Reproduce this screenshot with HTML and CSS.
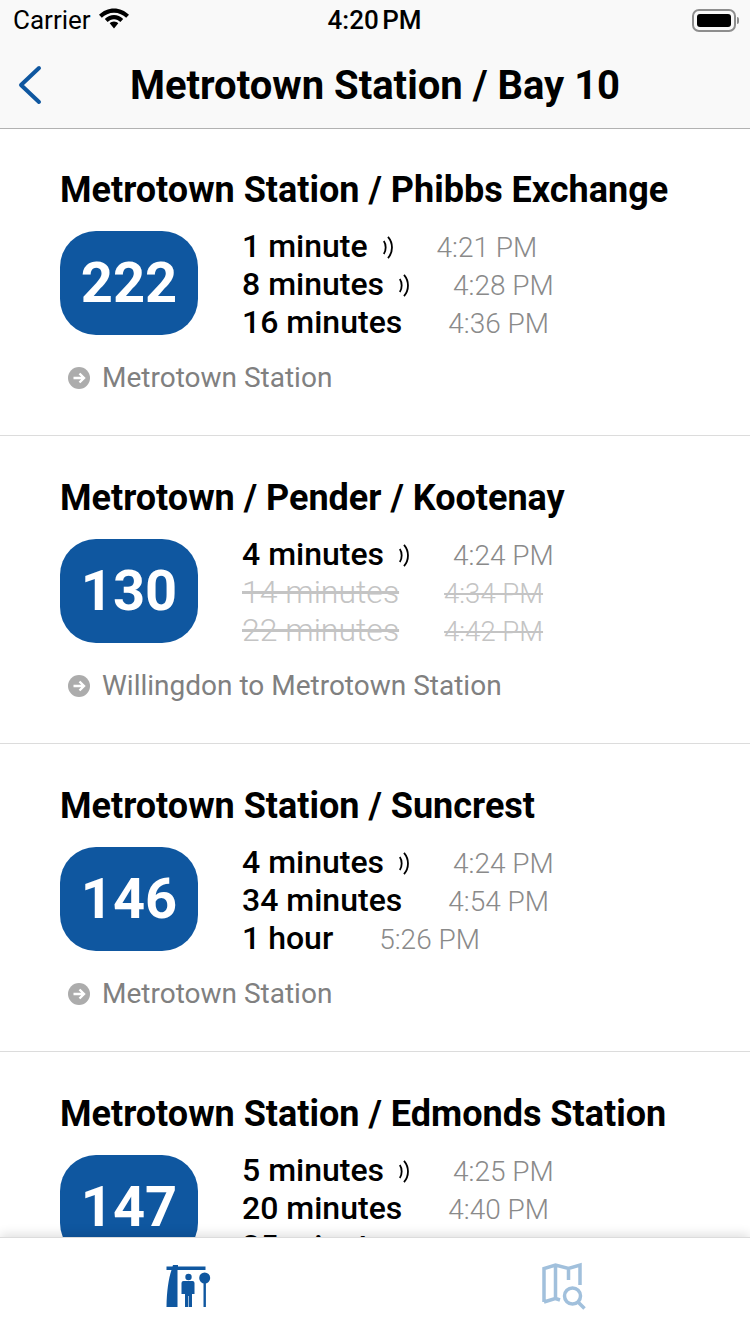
FILE: index.html
```html
<!DOCTYPE html>
<html lang="en">
<head>
  <meta charset="UTF-8" />
  <title>Metrotown Station / Bay 10</title>
  <link rel="stylesheet" href="styles.css">
</head>
<body>
  <div class="screen">
    <header class="top">
      <div class="status">
        <div class="status-left">
          <span>Carrier</span>
          <svg class="wifi" viewBox="0 0 30 22"><path d="M15 0.500C9.300 0.500 4 2.800 0 6.800L2.800 9.800C5.900 6.700 10.200 4.700 15 4.700S24.100 6.700 27.200 9.800L30 6.800C26 2.800 20.700 0.500 15 0.500Z M15 7C11.700 7 8.400 8.400 5.800 11L8.600 14C10.300 12.300 12.500 11.200 15 11.200S19.700 12.300 21.400 14L24.200 11C21.600 8.400 18.300 7 15 7Z M15 13.500C13.300 13.500 11.800 14.200 10.700 15.300L15 20.500L19.300 15.300C18.200 14.200 16.700 13.500 15 13.500Z"/></svg>
        </div>
        <div class="clock">4:20 PM</div>
        <div class="status-right">
          <div class="battery"><div class="battery-fill"></div></div>
          <div class="battery-cap"></div>
        </div>
      </div>
      <div class="nav">
        <svg class="back" viewBox="0 0 26 40"><path d="M22 3L4 20L22 37"/></svg>
        <h1>Metrotown Station / Bay 10</h1>
      </div>
    </header>

    <main class="list">
      <section class="route">
        <h2>Metrotown Station / Phibbs Exchange</h2>
        <div class="route-body">
          <div class="badge">222</div>
          <div class="times">
            <div class="row"><b>1 minute</b><svg class="live" viewBox="0 0 11 23"><path d="M0.800 5C3.300 8.500 3.300 14.500 0.800 18M5 0.800C10.300 7 10.300 16 5 22.200"/></svg><span>4:21 PM</span></div>
            <div class="row"><b>8 minutes</b><svg class="live" viewBox="0 0 11 23"><path d="M0.800 5C3.300 8.500 3.300 14.500 0.800 18M5 0.800C10.300 7 10.300 16 5 22.200"/></svg><span>4:28 PM</span></div>
            <div class="row"><b>16 minutes</b><span>4:36 PM</span></div>
          </div>
        </div>
        <div class="dest"><svg class="arrow" viewBox="0 0 22 22"><circle cx="11" cy="11" r="11"/><path d="M5.500 11H15.500M11.500 6.500L16 11L11.500 15.500"/></svg><span>Metrotown Station</span></div>
      </section>

      <section class="route">
        <h2>Metrotown / Pender / Kootenay</h2>
        <div class="route-body">
          <div class="badge">130</div>
          <div class="times">
            <div class="row"><b>4 minutes</b><svg class="live" viewBox="0 0 11 23"><path d="M0.800 5C3.300 8.500 3.300 14.500 0.800 18M5 0.800C10.300 7 10.300 16 5 22.200"/></svg><span>4:24 PM</span></div>
            <div class="row cancelled"><b>14 minutes</b><span>4:34 PM</span></div>
            <div class="row cancelled"><b>22 minutes</b><span>4:42 PM</span></div>
          </div>
        </div>
        <div class="dest"><svg class="arrow" viewBox="0 0 22 22"><circle cx="11" cy="11" r="11"/><path d="M5.500 11H15.500M11.500 6.500L16 11L11.500 15.500"/></svg><span>Willingdon to Metrotown Station</span></div>
      </section>

      <section class="route">
        <h2>Metrotown Station / Suncrest</h2>
        <div class="route-body">
          <div class="badge">146</div>
          <div class="times">
            <div class="row"><b>4 minutes</b><svg class="live" viewBox="0 0 11 23"><path d="M0.800 5C3.300 8.500 3.300 14.500 0.800 18M5 0.800C10.300 7 10.300 16 5 22.200"/></svg><span>4:24 PM</span></div>
            <div class="row"><b>34 minutes</b><span>4:54 PM</span></div>
            <div class="row"><b>1 hour</b><span>5:26 PM</span></div>
          </div>
        </div>
        <div class="dest"><svg class="arrow" viewBox="0 0 22 22"><circle cx="11" cy="11" r="11"/><path d="M5.500 11H15.500M11.500 6.500L16 11L11.500 15.500"/></svg><span>Metrotown Station</span></div>
      </section>

      <section class="route">
        <h2>Metrotown Station / Edmonds Station</h2>
        <div class="route-body">
          <div class="badge">147</div>
          <div class="times">
            <div class="row"><b>5 minutes</b><svg class="live" viewBox="0 0 11 23"><path d="M0.800 5C3.300 8.500 3.300 14.500 0.800 18M5 0.800C10.300 7 10.300 16 5 22.200"/></svg><span>4:25 PM</span></div>
            <div class="row"><b>20 minutes</b><span>4:40 PM</span></div>
            <div class="row"><b>35 minutes</b><span>4:55 PM</span></div>
          </div>
        </div>
      </section>
    </main>

    <footer class="tabs">
      <div class="tab">
        <svg class="tab-icon" viewBox="0 0 46 46">
          <path class="solid" d="M1.500 42C1.800 26 3.500 14 6.500 5H1.500V1.500H7.500L8 0H13V1.500H40.500V5H12.500V42Z"/>
          <circle class="solid" cx="23.500" cy="12" r="3.200"/>
          <path class="solid" d="M16.500 18Q16.500 16 18.500 16H27.500Q29.500 16 29.500 18V29H27V42H23.800V31H23.200V42H20V29H16.500Z"/>
          <circle class="solid" cx="39.700" cy="13" r="5.500"/>
          <rect class="solid" x="38.500" y="17" width="2.400" height="25"/>
        </svg>
      </div>
      <div class="tab">
        <svg class="tab-icon tab-icon-map" viewBox="0 -3 46 50">
          <path class="map" d="M4 37V3.500L15.500 0L28.500 3.500L40 0V20M4 37L15.500 33.500V0M15.500 33.500L20 35M28.500 3.500V15"/>
          <circle class="map" cx="32.500" cy="31" r="8"/>
          <path class="map" d="M38 37L44.500 43.500"/>
        </svg>
      </div>
    </footer>
  </div>
</body>
</html>
```

FILE: styles.css
```css
* {
  box-sizing: border-box;
}

html, body {
  margin: 0;
  padding: 0;
}

body {
  font-family: Roboto, "Liberation Sans", sans-serif;
  background: white;
  color: black;
}

.screen {
  width: 750px;
  height: 1334px;
  display: flex;
  flex-direction: column;
  overflow: hidden;
}

.top {
  flex: none;
  height: 129px;
  background: #f9f9f9;
  border-bottom: 1px solid #b2b2b2;
}

.status {
  height: 40px;
  padding: 0 11px 0 13px;
  display: grid;
  grid-template-columns: 1fr auto 1fr;
  align-items: center;
  font-size: 26px;
}

.status-left {
  display: flex;
  align-items: center;
  gap: 8px;
}

.wifi {
  width: 30px;
  height: 22px;
  margin-top: -2px;
}

.clock {
  padding-right: 3px;
  font-weight: 500;
  word-spacing: -3px;
}

.status-right {
  display: flex;
  align-items: center;
  justify-content: flex-end;
  gap: 1px;
}

.battery {
  width: 44px;
  height: 23px;
  padding: 3px;
  border: 2px solid #8e8e8e;
  border-radius: 7px;
}

.battery-fill {
  height: 100%;
  background: black;
  border-radius: 3px;
}

.battery-cap {
  width: 2px;
  height: 7px;
  background: #8e8e8e;
  border-radius: 0 2px 2px 0;
}

.nav {
  height: 88px;
  padding-top: 2px;
  position: relative;
  display: flex;
  align-items: center;
  justify-content: center;
}

.back {
  position: absolute;
  left: 17px;
  top: 25px;
  width: 26px;
  height: 40px;
  fill: none;
  stroke: #0f57a0;
  stroke-width: 4;
  stroke-linecap: round;
  stroke-linejoin: round;
}

h1 {
  margin: 0;
  font-size: 40px;
  font-weight: 700;
}

.list {
  flex: 1;
  min-height: 0;
  overflow: hidden;
}

.route {
  height: 308px;
  padding: 39px 0 0 60px;
  border-bottom: 1px solid #dcdcdc;
}

.route:first-child {
  height: 307px;
  padding-top: 38px;
}

h2 {
  margin: 1px 0 19px;
  font-size: 36px;
  line-height: 44px;
  font-weight: 700;
}

.route-body {
  display: flex;
  align-items: flex-start;
}

.badge {
  flex: none;
  width: 138px;
  height: 104px;
  border-radius: 36px;
  background: #0f57a0;
  color: white;
  font-size: 56px;
  font-weight: 700;
  display: flex;
  align-items: center;
  justify-content: center;
}

.times {
  margin: -3px 0 0 44px;
}

.row {
  height: 38px;
  display: flex;
  align-items: center;
  font-size: 32px;
}

.row b {
  margin-top: -2px;
  font-weight: 500;
}

.row span {
  margin-left: 46px;
  font-size: 28px;
  font-weight: 300;
  color: #8a8a8a;
}

.live {
  width: 11px;
  height: 23px;
  margin: 0 -3px 0 15px;
  fill: none;
  stroke: black;
  stroke-width: 1.800;
}

.cancelled b,
.cancelled span {
  font-weight: 300;
  color: #c4c4c4;
  text-decoration: line-through;
}

.cancelled span {
  margin-left: 45px;
  font-size: 27.500px;
}

.dest {
  margin: 19px 0 0 8px;
  display: flex;
  align-items: center;
  gap: 12px;
  font-size: 28px;
  color: #808080;
}

.arrow {
  width: 22px;
  height: 22px;
}

.arrow circle {
  fill: #acacac;
}

.arrow path {
  fill: none;
  stroke: white;
  stroke-width: 2.400;
}

.tabs {
  flex: none;
  height: 97px;
  background: white;
  border-top: 1px solid #dcdcdc;
  box-shadow: 0 -3px 10px rgba(0, 0, 0, 0.12);
  display: flex;
  position: relative;
}

.tab {
  flex: 1;
  display: flex;
  justify-content: center;
  padding-top: 27px;
}

.tab-icon {
  width: 46px;
  height: 46px;
}

.tab-icon-map {
  height: 50px;
  margin-top: -3px;
}

.solid {
  fill: #0f57a0;
}

.map {
  fill: none;
  stroke: #a1c0dc;
  stroke-width: 3.500;
}
```
